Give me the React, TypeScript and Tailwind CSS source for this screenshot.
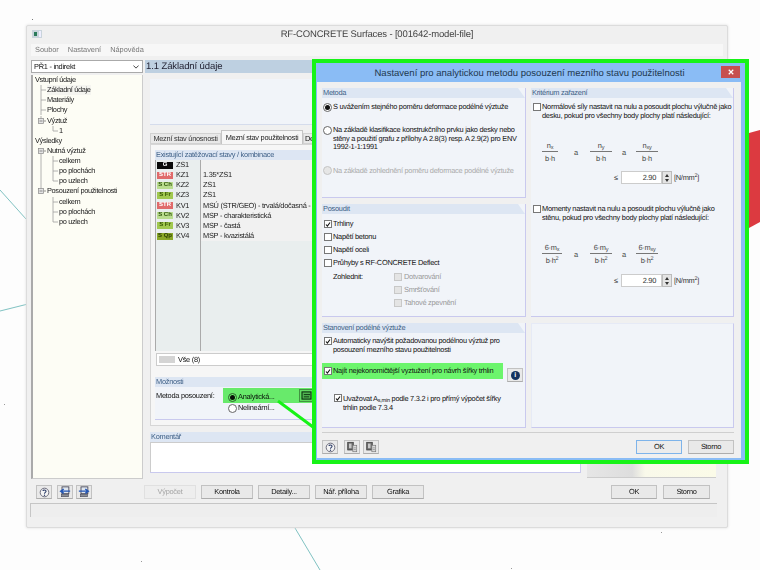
import React from "react";

function Radio({ on, dis }: { on?: boolean; dis?: boolean }) {
  return (
    <span className={`mr-[1px] flex h-[9px] w-[9px] shrink-0 items-center justify-center rounded-full border ${dis ? "border-[#c4c4c4] bg-[#e6e6e6]" : "border-[#666] bg-white"}`}>
      {on && <span className="h-[5px] w-[5px] rounded-full bg-[#111]" />}
    </span>
  );
}

function Check({ on, dis }: { on?: boolean; dis?: boolean }) {
  return (
    <span className={`flex h-[8px] w-[8px] shrink-0 items-center justify-center border ${dis ? "border-[#c8c8c8] bg-[#e4e4e4]" : "border-[#777] bg-white"}`}>
      {on && (
        <svg viewBox="0 0 9 9" className="h-[7px] w-[7px]">
          <path d="M1.5 4.5L3.6 7L7.5 1.5" fill="none" stroke="#111" strokeWidth="1.6" />
        </svg>
      )}
    </span>
  );
}

function Group({ title, className, children }: { title?: string; className: string; children?: React.ReactNode }) {
  return (
    <div className={`flex flex-col border-b border-r border-[#c9c9ee] bg-[#f1f4f9] ${className}`}>
      {title && (
        <div className="h-[10px] shrink-0 bg-[#dde6f3] pl-[1px] leading-[10px] text-[#3d5f86] [clip-path:polygon(0_0,calc(100%-7px)_0,100%_100%,0_100%)]">
          {title}
        </div>
      )}
      {children}
    </div>
  );
}

function Btn({ children, className = "", dis, focus }: { children?: React.ReactNode; className?: string; dis?: boolean; focus?: boolean }) {
  return (
    <div className={`flex h-[14px] shrink-0 items-center justify-center border ${focus ? "border-[#7eb4ea] bg-[#ececec]" : dis ? "border-[#e0e0e0] bg-[#eeeeee] text-[#a5a5a5]" : "border-[#c2c2c2] border-b-[#adadad] bg-[#e9e9e9] text-[#111]"} ${className}`}>
      {children}
    </div>
  );
}

function HelpIcon() {
  return (
    <svg viewBox="0 0 14 14" className="h-[11px] w-[11px]">
      <circle cx="7" cy="7" r="5.5" fill="#f4f4f4" stroke="#667" strokeWidth="1.2" />
      <path d="M5 5.2C5 3.6 9 3.4 9 5.4C9 6.9 7 6.9 7 8.6" fill="none" stroke="#2a3a66" strokeWidth="1.3" />
      <circle cx="7" cy="10.5" r="0.9" fill="#2a3a66" />
    </svg>
  );
}

function NavIcon({ flip }: { flip?: boolean }) {
  return (
    <svg viewBox="0 0 14 14" className="h-[12px] w-[12px]">
      <rect x="3.5" y="1" width="8" height="8" fill="#dfe6ef" stroke="#445" strokeWidth="1" />
      <rect x="3" y="9.5" width="8" height="3" fill="#8b8f96" stroke="#445" strokeWidth="0.7" />
      <path d={flip ? "M1 6H11M8.5 3.5L12 6L8.5 8.5" : "M13 6H3M5.5 3.5L2 6L5.5 8.5"} fill="none" stroke="#2457b5" strokeWidth="1.7" />
    </svg>
  );
}

function BookIcon() {
  return (
    <svg viewBox="0 0 14 14" className="h-[12px] w-[12px]">
      <rect x="2" y="1.5" width="6.5" height="9" fill="#6b6b6b" stroke="#333" strokeWidth="0.8" />
      <rect x="3.5" y="3" width="3" height="5.5" fill="#c8c8c8" />
      <rect x="8" y="5" width="4.5" height="7.5" fill="#dcdcdc" stroke="#777" strokeWidth="0.8" />
      <path d="M9 8H11.5M9 10H11.5" stroke="#777" strokeWidth="0.7" />
    </svg>
  );
}

const L = "M8 0V10M8 5H13";
const tree: { t: string; w: number; d?: string; exp?: boolean; sel?: boolean }[] = [
  { t: "Vstupní údaje", w: 2 },
  { t: "Základní údaje", w: 14, d: L, sel: true },
  { t: "Materiály", w: 14, d: L },
  { t: "Plochy", w: 14, d: L },
  { t: "Výztuž", w: 14, d: "M8 0V3", exp: true },
  { t: "1", w: 26, d: "M20 0V5H25" },
  { t: "Výsledky", w: 2 },
  { t: "Nutná výztuž", w: 14, d: "M8 8V10", exp: true },
  { t: "celkem", w: 26, d: "M8 0V10M20 0V10M20 5H25" },
  { t: "po plochách", w: 26, d: "M8 0V10M20 0V10M20 5H25" },
  { t: "po uzlech", w: 26, d: "M8 0V10M20 0V5H25" },
  { t: "Posouzení použitelnosti", w: 14, d: "M8 0V3", exp: true },
  { t: "celkem", w: 26, d: "M20 0V10M20 5H25" },
  { t: "po plochách", w: 26, d: "M20 0V10M20 5H25" },
  { t: "po uzlech", w: 26, d: "M20 0V5H25" },
];

const rows = [
  ["G", "bg-[#0a0a0a] text-white", "ZS1", ""],
  ["STR", "bg-[#e06a6a] text-white", "KZ1", "1.35*ZS1"],
  ["S Ch", "bg-[#b9dc8e] text-[#355a10]", "KZ2", "ZS1"],
  ["S Fr", "bg-[#a1c850] text-[#3a5a05]", "KZ3", "ZS1"],
  ["STR", "bg-[#e06a6a] text-white", "KV1", "MSÚ (STR/GEO) - trvalá/dočasná -"],
  ["S Ch", "bg-[#b9dc8e] text-[#355a10]", "KV2", "MSP - charakteristická"],
  ["S Fr", "bg-[#a1c850] text-[#3a5a05]", "KV3", "MSP - častá"],
  ["S Qp", "bg-[#8aa828] text-[#2f4204]", "KV4", "MSP - kvazistálá"],
];

function Frac({ top, bottom, w }: { top: React.ReactNode; bottom: React.ReactNode; w: string }) {
  return (
    <div className={`flex flex-col items-center leading-[10px] text-[#444] ${w}`}>
      <div className="h-[11px] w-full border-b border-[#777] text-center">{top}</div>
      <div className="mt-[2px] text-center">{bottom}</div>
    </div>
  );
}

function FracRow({ a, b, c, bottom, first }: { a: React.ReactNode; b: React.ReactNode; c: React.ReactNode; bottom: React.ReactNode; first: string }) {
  return (
    <div className="ml-[11px] flex items-center">
      <div className="w-[20px]">
        <Frac top={a} bottom={bottom} w={first} />
      </div>
      <span className="w-[28px] text-center text-[#444]">a</span>
      <Frac top={b} bottom={bottom} w="w-[22px]" />
      <span className="w-[24px] text-center text-[#444]">a</span>
      <Frac top={c} bottom={bottom} w="w-[22px]" />
    </div>
  );
}

function Limit({ className }: { className: string }) {
  return (
    <div className={`flex items-center text-[#333] ${className}`}>
      <span className="w-[7px]">≤</span>
      <div className="flex h-[13px] w-[41px] items-center justify-end border border-[#ccc] bg-white pr-[5px]">2.90</div>
      <div className="flex h-[13px] w-[10px] flex-col items-center justify-center gap-[2px] border border-[#bbb] bg-[#e4e4e4]">
        <span className="h-0 w-0 border-x-[2.5px] border-b-[3px] border-x-transparent border-b-[#333]" />
        <span className="h-0 w-0 border-x-[2.5px] border-t-[3px] border-x-transparent border-t-[#333]" />
      </div>
      <span className="ml-[2px]">
        [N/mm<sup>2</sup>]
      </span>
    </div>
  );
}

function Dialog() {
  return (
    <div className="absolute left-[312px] top-[59px] flex h-[405px] w-[437px] flex-col border-[4px] border-[#17f317] bg-[#8abcf5]">
      <div className="flex h-[19px] shrink-0 items-center">
        <div className="flex-1 pl-[22px] pt-[3px] text-center text-[9.5px] tracking-normal text-[#22384f]">Nastavení pro analytickou metodu posouzení mezního stavu použitelnosti</div>
        <div className="mb-[1px] mr-[5px] flex h-[12px] w-[19px] items-center justify-center bg-[#c75050]">
          <svg viewBox="0 0 8 8" className="h-[6px] w-[6px]">
            <path d="M1 1L7 7M7 1L1 7" stroke="#fff" strokeWidth="1.6" />
          </svg>
        </div>
      </div>
      <div className="mb-[2px] ml-[1px] mr-[4px] flex flex-1 flex-col bg-[#f0f0f0] pl-[5px] pr-[7px] pt-[6px] text-[#111]">
        <div className="flex gap-[5px]">
          <div className="flex w-[204px] flex-col gap-[6px]">
            <Group title="Metoda" className="h-[110px]">
              <div className="ml-[1px] mt-[4px] flex h-[10px] items-center gap-0">
                <Radio on />
                <span>S uvážením stejného poměru deformace podélné výztuže</span>
              </div>
              <div className="ml-[1px] mt-[14px] flex leading-[8.5px]">
                <Radio />
                <span>
                  Na základě klasifikace konstrukčního prvku jako desky nebo
                  <br />
                  stěny a použití grafu z přílohy A 2.8(3) resp. A 2.9(2) pro ENV
                  <br />
                  1992-1-1:1991
                </span>
              </div>
              <div className="ml-[1px] mt-[14px] flex h-[10px] items-center text-[#aaa]">
                <Radio dis />
                <span>Na základě zohlednění poměru deformace podélné výztuže</span>
              </div>
            </Group>
            <Group title="Posoudit" className="h-[113px]">
              <div className="ml-[2px] mt-[5px] flex flex-col gap-[3px] leading-[10px]">
                {[["Trhliny", true], ["Napětí betonu"], ["Napětí oceli"], ["Průhyby s RF-CONCRETE Deflect"]].map(([t, on]) => (
                  <div key={t as string} className="flex items-center gap-[1px]">
                    <Check on={!!on} />
                    <span>{t}</span>
                  </div>
                ))}
              </div>
              <div className="mt-[4px] flex">
                <span className="ml-[11px] w-[61px] leading-[10px]">Zohlednit:</span>
                <div className="flex flex-col gap-[3px] leading-[10px] text-[#999]">
                  {["Dotvarování", "Smršťování", "Tahové zpevnění"].map((t) => (
                    <div key={t} className="flex items-center gap-[2px]">
                      <Check dis />
                      <span>{t}</span>
                    </div>
                  ))}
                </div>
              </div>
            </Group>
            <Group title="Stanovení podélné výztuže" className="h-[105px]">
              <div className="ml-[2px] mt-[4px] flex gap-[1px] leading-[8.5px]">
                <Check on />
                <span>
                  Automaticky navýšit požadovanou podélnou výztuž pro
                  <br />
                  posouzení mezního stavu použitelnosti
                </span>
              </div>
              <div className="mt-[9px] flex">
                <div className="flex h-[16px] w-[181px] items-center gap-[1px] bg-[#6cf56c] pl-[2px]">
                  <Check on />
                  <span>Najít nejekonomičtější vyztužení pro návrh šířky trhlin</span>
                </div>
                <Btn className="ml-[4px] mt-[5px] w-[16px]">
                  <span className="flex h-[9px] w-[9px] items-center justify-center rounded-full bg-[#13325f] text-[7px] font-bold leading-none text-white">i</span>
                </Btn>
              </div>
              <div className="ml-[12px] mt-[12px] flex gap-[1px] leading-[9px]">
                <Check on />
                <span>
                  Uvažovat A<sub>s,min</sub> podle 7.3.2 i pro přímý výpočet šířky
                  <br />
                  trhlin podle 7.3.4
                </span>
              </div>
            </Group>
          </div>
          <div className="flex w-[203px] flex-col gap-[6px]">
            <Group title="Kritérium zařazení" className="h-[229px]">
              <div className="ml-[2px] mt-[5px] flex gap-[1px] leading-[8.5px]">
                <Check />
                <span>
                  Normálové síly nastavit na nulu a posoudit plochu výlučně jako
                  <br />
                  desku, pokud pro všechny body plochy platí následující:
                </span>
              </div>
              <div className="mt-[21px]">
                <FracRow first="w-[16px]" a={<>n<sub>x</sub></>} b={<>n<sub>y</sub></>} c={<>n<sub>xy</sub></>} bottom="b·h" />
              </div>
              <Limit className="ml-[83px] mt-[7px]" />
              <div className="ml-[2px] mt-[21px] flex gap-[1px] leading-[8.5px]">
                <Check />
                <span>
                  Momenty nastavit na nulu a posoudit plochu výlučně jako
                  <br />
                  stěnu, pokud pro všechny body plochy platí následující:
                </span>
              </div>
              <div className="mt-[21px]">
                <FracRow first="w-[20px]" a={<>6·m<sub>x</sub></>} b={<>6·m<sub>y</sub></>} c={<>6·m<sub>xy</sub></>} bottom={<>b·h<sup>2</sup></>} />
              </div>
              <Limit className="ml-[83px] mt-[8px]" />
            </Group>
            <Group className="h-[105px] border-l border-t border-l-[#e6eaf6] border-t-[#e6eaf6]" />
          </div>
        </div>
        <div className="mt-[4px] h-[1px] shrink-0 bg-[#cfcfcf]" />
        <div className="mt-[7px] flex items-center">
          <Btn className="w-[16px]"><HelpIcon /></Btn>
          <Btn className="ml-[6px] w-[16px]"><BookIcon /></Btn>
          <Btn className="ml-[3px] w-[16px]"><BookIcon /></Btn>
          <div className="flex-1" />
          <Btn focus className="w-[46px]">OK</Btn>
          <Btn className="ml-[6px] w-[46px]">Storno</Btn>
        </div>
      </div>
    </div>
  );
}

function MainWindow() {
  return (
    <div className="absolute left-[26px] top-[25px] flex h-[503px] w-[702px] flex-col rounded-[2px] border border-[#dcdcdc] bg-[#f0f0f0] text-[#111] shadow-[0_0_3px_#ddd]">
      <div className="relative flex h-[18px] shrink-0 items-center justify-center text-[9.5px] tracking-[-0.15px] text-[#444]">
        <svg viewBox="0 0 10 8" className="absolute left-[5px] top-[4px] h-[8px] w-[10px]">
          <rect width="10" height="8" fill="#c9d4dc" />
          <rect x="2" y="2" width="3" height="4" fill="#2b7a5a" />
          <rect x="7" y="1" width="2" height="6" fill="#eef" />
        </svg>
        RF-CONCRETE Surfaces - [001642-model-file]
      </div>
      <div className="mx-[4px] flex h-[12px] shrink-0 items-center gap-[9px] bg-[#f7f7f7] pl-[4px] tracking-normal text-[#777]">
        <span>Soubor</span>
        <span>Nastavení</span>
        <span>Nápověda</span>
      </div>
      <div className="mx-[4px] mt-[4px] flex h-[419px] shrink-0 gap-[2px]">
        <div className="flex w-[112px] shrink-0 flex-col gap-[2px]">
          <div className="flex h-[13px] shrink-0 items-center justify-between border border-[#aaa] bg-white pl-[2px] pr-[3px]">
            <span>PŘ1 - indirekt</span>
            <svg viewBox="0 0 8 5" className="h-[4px] w-[6px]">
              <path d="M0.5 0.5L4 4L7.5 0.5" fill="none" stroke="#333" strokeWidth="1.2" />
            </svg>
          </div>
          <div className="flex-1 border-b border-l-2 border-r border-b-[#ccc] border-l-[#aaa] border-r-[#ccc] bg-[#fdfdf5] tracking-[-0.35px]">
            {tree.map((r, i) => (
              <div key={i} className="flex h-[10.14px] items-center text-[#222]">
                <span className="block h-[10px] shrink-0 overflow-visible" style={{ width: r.w }}>
                  {r.d && (
                    <svg viewBox="0 0 28 10" className="h-[10px] w-[28px]">
                      <path d={r.d} fill="none" stroke="#a0a0a0" strokeWidth="0.8" />
                      {r.exp && (
                        <>
                          <rect x="5.5" y="2.5" width="5" height="5" fill="#e4e4e4" stroke="#888" strokeWidth="0.7" />
                          <path d="M6.5 5H9.5M11 5H13" stroke="#666" strokeWidth="0.7" />
                        </>
                      )}
                    </svg>
                  )}
                </span>
                <span className={r.sel ? "bg-[#f5f5f0]" : ""}>{r.t}</span>
              </div>
            ))}
          </div>
        </div>
        <div className="flex min-w-0 flex-1 flex-col">
          <div className="flex h-[13px] shrink-0 items-center bg-[#bed0e1] pl-[1px] text-[9.5px] tracking-[-0.1px] text-[#223]">1.1 Základní údaje</div>
          <div className="ml-[5px] mr-[2px] mt-[6px] h-[46px] shrink-0 border-b border-r border-[#d5dcec] bg-[#f1f4f9]" />
          <div className="ml-[5px] mt-[5px] flex h-[14px] shrink-0 items-end">
            <div className="flex h-[11px] w-[71px] items-center justify-center border border-[#d2d2d2] bg-[#e8e8e8] text-[#333]">Mezní stav únosnosti</div>
            <div className="flex h-[14px] w-[82px] items-center justify-center border border-b-0 border-[#c4c4c4] bg-[#f6f6f6] text-[#222]">Mezní stav použitelnosti</div>
            <div className="flex h-[11px] w-[60px] items-center border border-[#d2d2d2] bg-[#e8e8e8] pl-[1px]">Detaily</div>
          </div>
          <div className="ml-[5px] h-[282px] w-[431px] shrink-0 border border-[#d6d6d6] bg-[#f6f6f6] px-[4px] pt-[5px]">
            <div className="h-[10px] bg-[#dde6f3] pl-[1px] leading-[10px] text-[#3d5f86]">Existující zatěžovací stavy / kombinace</div>
            <div className="flex h-[191px] border-l border-[#aaa] bg-[#e9eeee]">
              <div className="w-[45px] shrink-0 border-r border-[#aaa]">
                {rows.map((r) => (
                  <div key={r[2]} className="flex h-[10.15px] items-center pl-[1px]">
                    <span className={`flex h-[7px] w-[16px] items-center justify-center overflow-hidden text-[6px] font-bold leading-[7px] tracking-normal ${r[1]}`}>{r[0]}</span>
                    <span className="ml-[3px] text-[#222]">{r[2]}</span>
                  </div>
                ))}
              </div>
              <div className="flex-1">
                {rows.map((r) => (
                  <div key={r[2]} className="flex h-[10.15px] items-center bg-[#f1f1f1] pl-[2px] text-[#222]">{r[3]}</div>
                ))}
              </div>
            </div>
            <div className="ml-[1px] mt-[2px] flex h-[13px] items-center justify-between border border-[#ccc] bg-white pl-[2px] pr-[3px]">
              <span className="flex items-center gap-[3px]">
                <span className="h-[7px] w-[16px] bg-[#d4d4d4]" />
                <span>Vše (8)</span>
              </span>
            </div>
            <Group title="Možnosti" className="mt-[11px] h-[43px] border-r-0">
              <div className="flex">
                <span className="ml-[1px] mt-[4px] w-[72px] leading-[10px]">Metoda posouzení:</span>
                <div className="flex w-[71px] flex-col pt-[5px]">
                  <div className="flex h-[10px] items-center">
                    <Radio on />
                    <span>Analytická...</span>
                  </div>
                  <div className="mt-[1px] flex h-[10px] items-center">
                    <Radio />
                    <span>Nelineární...</span>
                  </div>
                </div>
                <div className="mt-[2px] flex h-[13px] w-[14px] items-center justify-center border border-[#999] bg-[#e4e4e4]">
                  <svg viewBox="0 0 12 10" className="h-[9px] w-[11px]">
                    <rect x="1" y="1" width="10" height="8" fill="#bbb" stroke="#12301f" strokeWidth="1.2" />
                    <path d="M3 4H10M3 6.5H9" stroke="#12301f" strokeWidth="1" />
                  </svg>
                </div>
              </div>
            </Group>
          </div>
          <div className="ml-[5px] mt-[6px] flex items-stretch">
            <div className="w-[431px] shrink-0">
              <Group title="Komentář" className="h-[41px]">
                <div className="flex-1 border-l border-t border-[#ccc] bg-white" />
              </Group>
            </div>
            <div className="ml-[6px] h-[46px] w-[129px] border-b border-[#ccc] bg-[linear-gradient(90deg,#e6e6e6,#dddddd_35%,#f9f9ea_45%,#fbfbe8)]" />
          </div>
        </div>
      </div>
      <div className="mx-[4px] mt-[6px] flex items-center">
        <Btn className="ml-[5px] w-[16px]"><HelpIcon /></Btn>
        <Btn className="ml-[5px] w-[16px]"><NavIcon /></Btn>
        <Btn className="ml-[3px] w-[16px]"><NavIcon flip /></Btn>
        <Btn dis className="ml-[52px] w-[52px]">Výpočet</Btn>
        <Btn className="ml-[5px] w-[52px]">Kontrola</Btn>
        <Btn className="ml-[5px] w-[52px]">Detaily...</Btn>
        <Btn className="ml-[5px] w-[52px]">Nář. příloha</Btn>
        <Btn className="ml-[5px] w-[52px]">Grafika</Btn>
        <Btn className="ml-[187px] w-[46px]">OK</Btn>
        <Btn className="ml-[6px] w-[47px]">Storno</Btn>
      </div>
      <div className="mx-[3px] mt-[4px] h-[14px] w-[687px] border-l border-t border-[#c6c6c6] bg-[#eeeeee]" />
    </div>
  );
}

export default function App() {
  return (
    <div className="relative h-[570px] w-[760px] overflow-hidden whitespace-nowrap bg-[#fdfdfd] font-['Liberation_Sans',sans-serif] text-[7.4px] leading-[10px] tracking-[-0.26px] [text-rendering:geometricPrecision]">
      <svg viewBox="0 0 760 570" className="absolute inset-0 h-[570px] w-[760px]">
        <path d="M0 190L26 219M0 311L26 304.5M295 528L320 570" stroke="#5fb3b3" strokeWidth="0.8" fill="none" />
        <path d="M749 133L760 130V222L749 228Z" fill="#dc3a40" />
        <rect x="32" y="19" width="1" height="1" fill="#777" />
        <rect x="4" y="404" width="1" height="1" fill="#999" />
        <rect x="141" y="561" width="1" height="1" fill="#999" />
        <rect x="511" y="568" width="1" height="1" fill="#999" />
        <rect x="661" y="532" width="1" height="1" fill="#999" />
      </svg>
      <MainWindow />
      <svg viewBox="0 0 760 570" className="pointer-events-none absolute inset-0 h-[570px] w-[760px]">
        <rect x="223" y="388" width="89" height="15" fill="#6ef56e" className="mix-blend-multiply" />
        <path d="M278 401L313 427" stroke="#17f317" strokeWidth="3" />
      </svg>
      <Dialog />
    </div>
  );
}
